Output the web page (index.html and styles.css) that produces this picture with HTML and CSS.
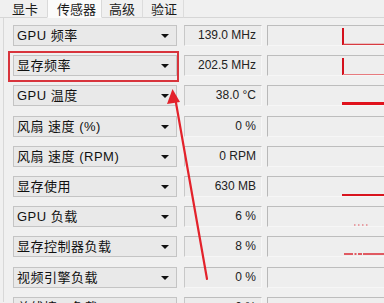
FILE: index.html
```html
<!DOCTYPE html>
<html lang="zh-CN">
<head>
<meta charset="utf-8">
<link rel="stylesheet" href="styles.css">
</head>
<body>
<div class="tabs">
  <div class="tab t1">显卡</div>
  <div class="tab t2 active">传感器</div>
  <div class="tab t3">高级</div>
  <div class="tab t4">验证</div>
  <div class="tab-rest"></div>
</div>
<div class="panel">
  <div class="rows">
    <div class="row">
      <div class="combo"><span class="lbl">GPU 频率</span><span class="caret"></span></div>
      <div class="value">139.0 MHz</div>
      <div class="graph"><svg width="130" height="19" viewBox="0 0 130 19"><line x1="75" y1="2" x2="75" y2="19" stroke="#d4101c" stroke-width="2"/><line x1="75" y1="18.5" x2="130" y2="18.5" stroke="#d83a40" stroke-width="1.3"/></svg></div>
    </div>
    <div class="row">
      <div class="combo"><span class="lbl">显存频率</span><span class="caret"></span></div>
      <div class="value">202.5 MHz</div>
      <div class="graph"><svg width="130" height="19" viewBox="0 0 130 19"><line x1="75" y1="2" x2="75" y2="19" stroke="#d4101c" stroke-width="2"/><line x1="75" y1="18.5" x2="130" y2="18.5" stroke="#e77a7e" stroke-width="1.2"/></svg></div>
    </div>
    <div class="row">
      <div class="combo"><span class="lbl">GPU 温度</span><span class="caret"></span></div>
      <div class="value">38.0 °C</div>
      <div class="graph"><svg width="130" height="19" viewBox="0 0 130 19"><line x1="74" y1="17.5" x2="130" y2="17.5" stroke="#e0121c" stroke-width="3"/></svg></div>
    </div>
    <div class="row">
      <div class="combo"><span class="lbl">风扇 速度 (%)</span><span class="caret"></span></div>
      <div class="value">0 %</div>
      <div class="graph"></div>
    </div>
    <div class="row">
      <div class="combo"><span class="lbl">风扇 速度 (RPM)</span><span class="caret"></span></div>
      <div class="value">0 RPM</div>
      <div class="graph"></div>
    </div>
    <div class="row">
      <div class="combo"><span class="lbl">显存使用</span><span class="caret"></span></div>
      <div class="value">630 MB</div>
      <div class="graph"><svg width="130" height="19" viewBox="0 0 130 19"><line x1="74" y1="18" x2="130" y2="18" stroke="#d8141e" stroke-width="2"/></svg></div>
    </div>
    <div class="row">
      <div class="combo"><span class="lbl">GPU 负载</span><span class="caret"></span></div>
      <div class="value">6 %</div>
      <div class="graph"><svg width="130" height="19" viewBox="0 0 130 19"><line x1="86" y1="18" x2="101" y2="18" stroke="#e0505a" stroke-width="1" stroke-dasharray="1.5 2.5"/></svg></div>
    </div>
    <div class="row">
      <div class="combo"><span class="lbl">显存控制器负载</span><span class="caret"></span></div>
      <div class="value">8 %</div>
      <div class="graph"><svg width="130" height="19" viewBox="0 0 130 19"><line x1="76" y1="17" x2="130" y2="17" stroke="#dc2a34" stroke-width="1.4" stroke-dasharray="9 1.5 2 1.5 4 1 30 0"/></svg></div>
    </div>
    <div class="row">
      <div class="combo"><span class="lbl">视频引擎负载</span><span class="caret"></span></div>
      <div class="value">0 %</div>
      <div class="graph"></div>
    </div>
    <div class="row">
      <div class="combo"><span class="lbl">总线接口负载</span><span class="caret"></span></div>
      <div class="value">0 %</div>
      <div class="graph"></div>
    </div>
  </div>
</div>
<div class="mark-box"></div>
<svg class="arrow" width="384" height="303" viewBox="0 0 384 303">
  <line x1="207" y1="279" x2="175.5" y2="100" stroke="#e3222b" stroke-width="2.2" stroke-linecap="round"/>
  <polygon points="172.5,89 167,104 180,102" fill="#e3222b"/>
</svg>
</body>
</html>
```

FILE: styles.css
```css
html, body {
  margin: 0;
  padding: 0;
}
body {
  width: 384px;
  height: 303px;
  overflow: hidden;
  background: #f0f0f0;
  position: relative;
  font-family: "Liberation Sans", "Noto Sans CJK SC", sans-serif;
  color: #111;
}
.tabs {
  display: flex;
  height: 17px;
  font-family: "Noto Sans CJK SC", sans-serif;
  font-size: 13px;
  line-height: 17px;
}
.tab {
  border-bottom: 1px solid #d6d6d6;
  box-sizing: border-box;
  height: 18px;
  color: #1a1a1a;
  white-space: nowrap;
  flex: none;
}
.t1 { padding: 0 9px 0 12px; }
.t2 { padding: 0 5px 0 9px; }
.t3 { padding: 0 7px 0 7px; border-left: 1px solid #dcdcdc; }
.t4 { padding: 0 6px 0 8px; border-left: 1px solid #dcdcdc; border-right: 1px solid #dcdcdc; }
.tab.active {
  background: #fbfbfb;
  border-bottom-color: #fbfbfb;
  border-left: 1px solid #d9d9d9;
  border-right: 1px solid #d9d9d9;
}
.t2 + .t3 { border-left: none; }
.tab-rest {
  flex: 1;
  border-bottom: 1px solid #d6d6d6;
  height: 18px;
  box-sizing: border-box;
}
.panel {
  margin-left: 3px;
  border-left: 1px solid #d8d8d8;
  height: 285px;
}
.rows {
  padding: 8px 0 0 9px;
  display: flex;
  flex-direction: column;
  gap: 9.2px;
}
.row {
  display: grid;
  grid-template-columns: 164px 78px 130px;
  column-gap: 7px;
  height: 21px;
}
.row .graph { margin-left: -2px; }
.combo {
  box-sizing: border-box;
  height: 21px;
  border: 1px solid #c4c4c4;
  background: #e9e9e9;
  display: flex;
  align-items: center;
  justify-content: space-between;
  padding: 0 7px 0 3px;
}
.lbl {
  font-size: 13px;
  line-height: 19px;
  letter-spacing: 0.5px;
  white-space: nowrap;
  color: #111;
}
.caret {
  width: 0;
  height: 0;
  border-left: 4px solid transparent;
  border-right: 4px solid transparent;
  border-top: 4px solid #111;
  margin-top: 1px;
}
.value {
  box-sizing: border-box;
  height: 21px;
  border-top: 1px solid #bdbdbd;
  border-left: 1px solid #c8c8c8;
  border-right: 1px solid #f6f6f6;
  border-bottom: 1px solid #f6f6f6;
  background: #ececec;
  font-size: 12px;
  line-height: 19px;
  text-align: right;
  padding-right: 5px;
  color: #222;
  white-space: nowrap;
}
.graph {
  box-sizing: border-box;
  height: 21px;
  border-top: 1px solid #bdbdbd;
  border-left: 1px solid #b8b8b8;
  border-bottom: 1px solid #f6f6f6;
  background: #eeeeee;
  overflow: hidden;
}
.graph svg { display: block; }
.mark-box {
  position: absolute;
  left: 8px;
  top: 51px;
  width: 171px;
  height: 31px;
  box-sizing: border-box;
  border: 2px solid #d8343c;
}
.arrow {
  position: absolute;
  left: 0;
  top: 0;
  pointer-events: none;
}
```
